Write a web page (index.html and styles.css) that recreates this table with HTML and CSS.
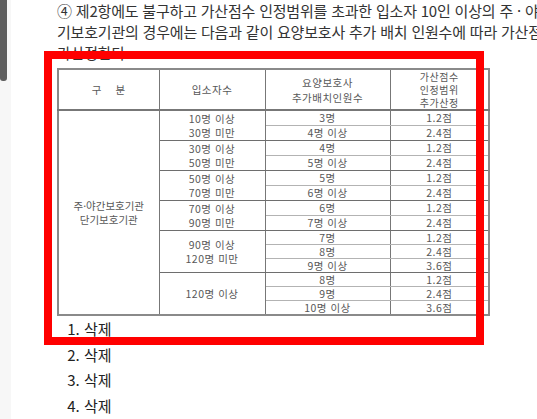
FILE: index.html
```html
<!DOCTYPE html>
<html lang="ko">
<head>
<meta charset="utf-8">
<title>가산점수 추가산정</title>
<link rel="stylesheet" href="styles.css">
</head>
<body>
<div class="page">
  <aside class="rail"><div class="thumb"></div></aside>
  <main class="content">
    <p class="clause">④ 제2항에도 불구하고 가산점수 인정범위를 초과한 입소자 10인 이상의 주 · 야간보호기관 및 단<br>기보호기관의 경우에는 다음과 같이 요양보호사 추가 배치 인원수에 따라 가산점수를 추<br>가산정한다.</p>
    <table class="scan">
      <colgroup><col class="c1"><col class="c2"><col class="c3"><col class="c4"></colgroup>
      <thead>
        <tr class="head">
          <th>구&nbsp;&nbsp;&nbsp;&nbsp;분</th>
          <th>입소자수</th>
          <th>요양보호사<br>추가배치인원수</th>
          <th class="tall">가산점수<br>인정범위<br>추가산정</th>
        </tr>
      </thead>
      <tbody>
        <tr class="r2"><td class="kind" rowspan="14">주·야간보호기관<br>단기보호기관</td><td class="cnt" rowspan="2">10명 이상<br>30명 미만</td><td class="sub">3명</td><td class="sub">1.2점</td></tr>
        <tr class="r2 end"><td>4명 이상</td><td>2.4점</td></tr>
        <tr class="r2"><td class="cnt" rowspan="2">30명 이상<br>50명 미만</td><td class="sub">4명</td><td class="sub">1.2점</td></tr>
        <tr class="r2 end"><td>5명 이상</td><td>2.4점</td></tr>
        <tr class="r2"><td class="cnt" rowspan="2">50명 이상<br>70명 미만</td><td class="sub">5명</td><td class="sub">1.2점</td></tr>
        <tr class="r2 end"><td>6명 이상</td><td>2.4점</td></tr>
        <tr class="r2"><td class="cnt" rowspan="2">70명 이상<br>90명 미만</td><td class="sub">6명</td><td class="sub">1.2점</td></tr>
        <tr class="r2 end"><td>7명 이상</td><td>2.4점</td></tr>
        <tr class="r3"><td class="cnt" rowspan="3">90명 이상<br>120명 미만</td><td class="sub">7명</td><td class="sub">1.2점</td></tr>
        <tr class="r3"><td class="sub">8명</td><td class="sub">2.4점</td></tr>
        <tr class="r3 end"><td>9명 이상</td><td>3.6점</td></tr>
        <tr class="r3"><td class="cnt" rowspan="3">120명 이상</td><td class="sub">8명</td><td class="sub">1.2점</td></tr>
        <tr class="r3"><td class="sub">9명</td><td class="sub">2.4점</td></tr>
        <tr class="r3"><td>10명 이상</td><td>3.6점</td></tr>
      </tbody>
    </table>
    <ol class="items">
      <li>삭제</li>
      <li>삭제</li>
      <li>삭제</li>
      <li>삭제</li>
    </ol>
  </main>
</div>
<div class="mark"></div>
</body>
</html>
```

FILE: styles.css
```css
html, body {
  margin: 0;
  padding: 0;
  background: #ffffff;
  overflow: hidden;
  height: 100%;
}

.page {
  display: flex;
  height: 100vh;
  font-family: "Noto Sans CJK KR", "Noto Sans", sans-serif;
}

.rail {
  flex: 0 0 11px;
  background: #f7f7f7;
}

.thumb {
  width: 7px;
  height: 81px;
  background: #5e5e5e;
  border-radius: 0 0 3px 3px;
}

.content {
  flex: 0 0 auto;
  width: 640px;
  padding-left: 46px;
}

.clause {
  margin: 0;
  font-size: 15px;
  line-height: 21px;
  color: #333333;
  white-space: nowrap;
  letter-spacing: -0.2px;
}

.scan {
  margin-top: 5px;
  border-collapse: collapse;
  width: 431px;
  table-layout: fixed;
  border: 2px solid #8a8a8a;
  color: #585858;
  font-size: 10.5px;
  text-align: center;
  letter-spacing: 0.5px;
}

.c1 { width: 101px; }
.c2 { width: 106px; }
.c3 { width: 125px; }
.c4 { width: 99px; }

.scan th {
  font-weight: normal;
  height: 38px;
  padding: 0;
  line-height: 15px;
  border: 1px solid #777777;
  border-bottom-width: 2px;
}

.scan th.tall {
  font-size: 10px;
  line-height: 13px;
  vertical-align: bottom;
  padding-bottom: 0;
}

.scan td {
  padding: 0;
  border-left: 1px solid #777777;
  border-right: 1px solid #777777;
  white-space: nowrap;
  overflow: hidden;
}

.r2 td { height: 14px; line-height: 14px; }
.r3 td { height: 13px; line-height: 13px; }

.scan td.sub {
  border-bottom: 1px solid #b3b3b3;
}

.scan tr.end td {
  border-bottom: 1px solid #6e6e6e;
}

.scan td.cnt {
  line-height: 14px;
  border-bottom: 1px solid #6e6e6e;
}

.scan td.kind {
  line-height: 14px;
  letter-spacing: 0;
}

.items {
  margin: 0;
  padding-left: 27px;
  font-size: 15px;
  line-height: 25.6px;
  color: #222222;
}

.mark {
  position: absolute;
  left: 44px;
  top: 51px;
  width: 424px;
  height: 278px;
  border: 8px solid #ff0000;
  pointer-events: none;
}
```
